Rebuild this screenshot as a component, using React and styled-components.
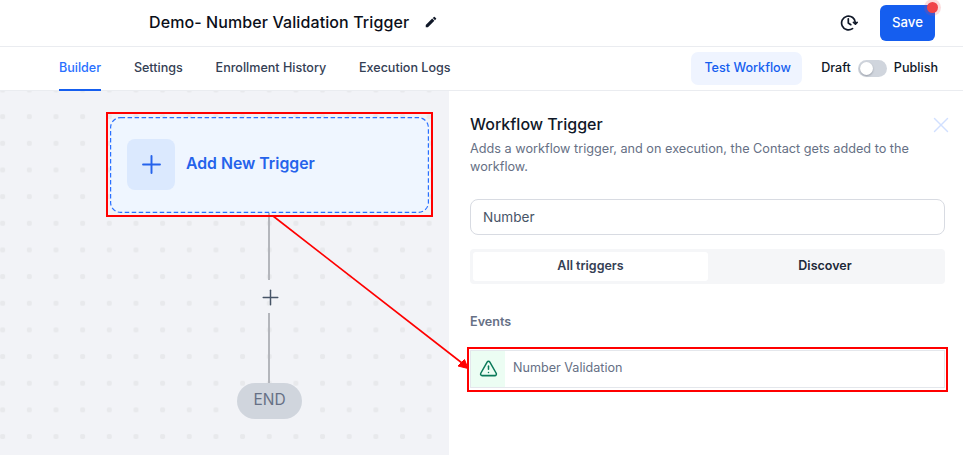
import React from 'react';
import styled, { createGlobalStyle } from 'styled-components';
import { MdEdit } from 'react-icons/md';
import { Plus, X, TriangleAlert } from 'lucide-react';

const GlobalStyle = createGlobalStyle`
  html, body {
    margin: 0;
    padding: 0;
    background: #ffffff;
    font-family: Inter, "Liberation Sans", sans-serif;
    overflow: hidden;
  }
  * {
    box-sizing: border-box;
  }
`;

const Page = styled.div`
  position: relative;
  width: 963px;
  height: 455px;
  display: flex;
  flex-direction: column;
  overflow: hidden;
`;

const TopBar = styled.header`
  height: 47px;
  flex: none;
  display: flex;
  align-items: center;
  justify-content: space-between;
  padding: 0 28px 1px 149px;
  border-bottom: 1px solid #eaecf0;
`;

const TitleGroup = styled.div`
  display: flex;
  align-items: center;
  gap: 15px;
  padding-bottom: 2px;
  color: #101828;
`;

const Title = styled.h1`
  margin: 0;
  font-size: 16px;
  font-weight: 500;
  color: #0b0f19;
  letter-spacing: 0.1px;
`;

const TopActions = styled.div`
  display: flex;
  align-items: center;
  gap: 22px;
`;

const SaveButton = styled.button`
  position: relative;
  width: 55px;
  height: 36px;
  padding: 0 0 2px;
  border: 0;
  border-radius: 6px;
  background: #155eef;
  color: #ffffff;
  font: 500 13.2px Inter, sans-serif;
`;

const Dot = styled.span`
  position: absolute;
  top: -3px;
  right: -3px;
  width: 11px;
  height: 11px;
  border-radius: 50%;
  background: #f04349;
  box-shadow: 0 0 0 3px rgba(240, 67, 73, 0.18);
`;

const NavBar = styled.nav`
  height: 44px;
  flex: none;
  display: flex;
  align-items: stretch;
  justify-content: space-between;
  padding: 0 25px 0 59px;
  border-bottom: 1px solid #eaecf0;
`;

const Tabs = styled.div`
  display: flex;
  gap: 32.8px;
`;

const NavTab = styled.a`
  display: flex;
  align-items: center;
  height: 44px;
  padding-bottom: 1px;
  font-size: 12.55px;
  font-weight: 500;
  color: ${(p) => (p.$active ? '#2970ff' : '#344054')};
  border-bottom: 2px solid ${(p) => (p.$active ? '#155eef' : 'transparent')};
`;

const NavRight = styled.div`
  display: flex;
  align-items: center;
`;

const TestButton = styled.button`
  width: 111px;
  height: 33px;
  margin-right: 19px;
  padding: 0 0 2px 2px;
  border: 0;
  border-radius: 7px;
  background: #eff4ff;
  color: #155eef;
  font: 500 12.6px Inter, sans-serif;
`;

const ToggleLabel = styled.span`
  padding-bottom: 2px;
  font-size: 12.6px;
  font-weight: 500;
  color: #101828;
`;

const Toggle = styled.span`
  width: 29px;
  height: 17px;
  margin: 0 7px;
  padding: 2px;
  border-radius: 9px;
  background: #d0d5dd;
  display: flex;
`;

const Knob = styled.span`
  width: 13px;
  height: 13px;
  border-radius: 50%;
  background: #ffffff;
  box-shadow: 0 1px 2px rgba(16, 24, 40, 0.3);
`;

const Body = styled.main`
  flex: 1;
  display: flex;
  min-height: 0;
`;

const Canvas = styled.section`
  width: 449px;
  flex: none;
  display: flex;
  flex-direction: column;
  align-items: center;
  padding: 26px 20px 0 110px;
  background-color: #f2f3f7;
  background-image: radial-gradient(circle, #e8e9ec 2.5px, transparent 3px);
  background-size: 26.67px 26.67px;
  background-position: -10.67px -14.33px;
`;

const TriggerCard = styled.div`
  position: relative;
  width: 319px;
  height: 96px;
  flex: none;
  display: flex;
  align-items: center;
  gap: 11px;
  padding: 0 17px 2px;
  border-radius: 10px;
  background: #eff6ff;
`;

const DashedEdge = styled.svg`
  position: absolute;
  left: 0;
  top: 0;
  pointer-events: none;
`;

const TriggerIcon = styled.div`
  width: 48px;
  height: 51px;
  display: flex;
  align-items: center;
  justify-content: center;
  border-radius: 8px;
  background: #dbe9fe;
  color: #2563eb;
`;

const TriggerText = styled.span`
  padding-bottom: 2px;
  font-size: 15.8px;
  font-weight: 600;
  color: #2563eb;
`;

const Connector = styled.div`
  width: 2px;
  height: ${(p) => p.$h}px;
  margin-right: 1px;
  flex: none;
  background: #b4b6bc;
`;

const AddStep = styled.div`
  height: 33px;
  flex: none;
  display: flex;
  align-items: center;
  justify-content: center;
  padding: 1px 0 0 1px;
  color: #475467;
`;

const EndPill = styled.div`
  width: 65px;
  height: 36px;
  flex: none;
  display: flex;
  align-items: center;
  justify-content: center;
  padding-bottom: 3px;
  border-radius: 18px;
  background: #d0d5dd;
  color: #667085;
  font-size: 15.5px;
`;

const Panel = styled.aside`
  position: relative;
  flex: 1;
  padding: 23px 18px 0 21px;
  background: #ffffff;
`;

const PanelTitle = styled.h2`
  margin: 0;
  font-size: 16px;
  font-weight: 500;
  line-height: 20px;
  color: #101828;
`;

const PanelText = styled.p`
  margin: 6px 0 0;
  font-size: 12.7px;
  line-height: 18px;
  color: #667085;
`;

const CloseButton = styled.span`
  position: absolute;
  top: 21px;
  right: 9px;
  display: flex;
  color: #d1e0ff;
`;

const SearchBox = styled.div`
  height: 36px;
  margin-top: 23px;
  padding: 0 12px 1px;
  display: flex;
  align-items: center;
  border: 1px solid #d8dbe2;
  border-radius: 8px;
  font-size: 13.6px;
  color: #475467;
`;

const Segments = styled.div`
  height: 35px;
  margin-top: 14px;
  padding: 3px;
  display: grid;
  grid-template-columns: 235px 1fr;
  border-radius: 4px;
  background: #f5f6f8;
`;

const Segment = styled.div`
  display: flex;
  align-items: center;
  justify-content: center;
  padding-bottom: 2px;
  border-radius: 3px;
  font-size: 12.5px;
  font-weight: 600;
  color: ${(p) => (p.$active ? '#344054' : '#1d2939')};
  background: ${(p) => (p.$active ? '#ffffff' : 'transparent')};
`;

const SectionLabel = styled.div`
  margin-top: 30px;
  font-size: 12.6px;
  font-weight: 600;
  line-height: 16px;
  color: #667085;
`;

const EventRow = styled.div`
  height: 38px;
  margin-top: 20px;
  display: flex;
  align-items: center;
  gap: 8px;
  border: 1px solid #e4e7ec;
  font-size: 12.6px;
  color: #667085;
`;

const EventIcon = styled.div`
  width: 34px;
  height: 100%;
  padding-bottom: 2px;
  display: flex;
  align-items: center;
  justify-content: center;
  background: #ecfdf3;
  color: #0b7a5a;
`;

const EventName = styled.span`
  padding-bottom: 3px;
`;

const RedBox = styled.div`
  position: absolute;
  left: ${(p) => p.$x}px;
  top: ${(p) => p.$y}px;
  width: ${(p) => p.$w}px;
  height: ${(p) => p.$h}px;
  border: 2px solid #ff0000;
  pointer-events: none;
`;

const ArrowLayer = styled.svg`
  position: absolute;
  left: 0;
  top: 0;
  pointer-events: none;
`;

const HistoryIcon = () => (
  <svg width="18" height="18" viewBox="0 0 18 18" fill="none" stroke="#101828" strokeWidth="1.7" strokeLinecap="round" strokeLinejoin="round">
    <path d="M15.4 8.700A6.900 6.900 0 1 0 12.500 14.600" />
    <path d="M8.300 4.800v4.200l2.500 1.700" />
    <path d="M13.500 8.400l1.900 1.700 1.700-1.700" />
  </svg>
);

const tabs = ['Builder', 'Settings', 'Enrollment History', 'Execution Logs'];

const App = () => {
  return (
    <Page>
      <GlobalStyle />
      <TopBar>
        <TitleGroup>
          <Title>Demo- Number Validation Trigger</Title>
          <MdEdit size={14} />
        </TitleGroup>
        <TopActions>
          <HistoryIcon />
          <SaveButton>
            Save
            <Dot />
          </SaveButton>
        </TopActions>
      </TopBar>
      <NavBar>
        <Tabs>
          {tabs.map((t, i) => (
            <NavTab key={t} $active={i === 0}>{t}</NavTab>
          ))}
        </Tabs>
        <NavRight>
          <TestButton>Test Workflow</TestButton>
          <ToggleLabel>Draft</ToggleLabel>
          <Toggle><Knob /></Toggle>
          <ToggleLabel>Publish</ToggleLabel>
        </NavRight>
      </NavBar>
      <Body>
        <Canvas>
          <TriggerCard>
            <DashedEdge width="319" height="96" viewBox="0 0 319 96" fill="none">
              <rect x="0.6" y="0.6" width="317.800" height="94.800" rx="10" stroke="#2970ff" strokeWidth="1.2" strokeDasharray="4.500 2.500" />
            </DashedEdge>
            <TriggerIcon><Plus size={29} strokeWidth={1.6} /></TriggerIcon>
            <TriggerText>Add New Trigger</TriggerText>
          </TriggerCard>
          <Connector $h={67} />
          <AddStep><Plus size={25} strokeWidth={1.4} /></AddStep>
          <Connector $h={70} />
          <EndPill>END</EndPill>
        </Canvas>
        <Panel>
          <PanelTitle>Workflow Trigger</PanelTitle>
          <PanelText>Adds a workflow trigger, and on execution, the Contact gets added to the workflow.</PanelText>
          <CloseButton><X size={26} strokeWidth={1.3} /></CloseButton>
          <SearchBox>Number</SearchBox>
          <Segments>
            <Segment $active>All triggers</Segment>
            <Segment>Discover</Segment>
          </Segments>
          <SectionLabel>Events</SectionLabel>
          <EventRow>
            <EventIcon><TriangleAlert size={19} strokeWidth={1.9} /></EventIcon>
            <EventName>Number Validation</EventName>
          </EventRow>
        </Panel>
      </Body>
      <RedBox $x={106} $y={112} $w={327} $h={105} />
      <RedBox $x={467} $y={347} $w={481} $h={45} />
      <ArrowLayer width="963" height="455" viewBox="0 0 963 455">
        <line x1="273" y1="216" x2="462" y2="363" stroke="#ff0000" strokeWidth="1.6" />
        <path d="M468 368.500L458 366L464.500 359.500Z" fill="#ff0000" stroke="#ff0000" />
      </ArrowLayer>
    </Page>
  );
};

export default App;
